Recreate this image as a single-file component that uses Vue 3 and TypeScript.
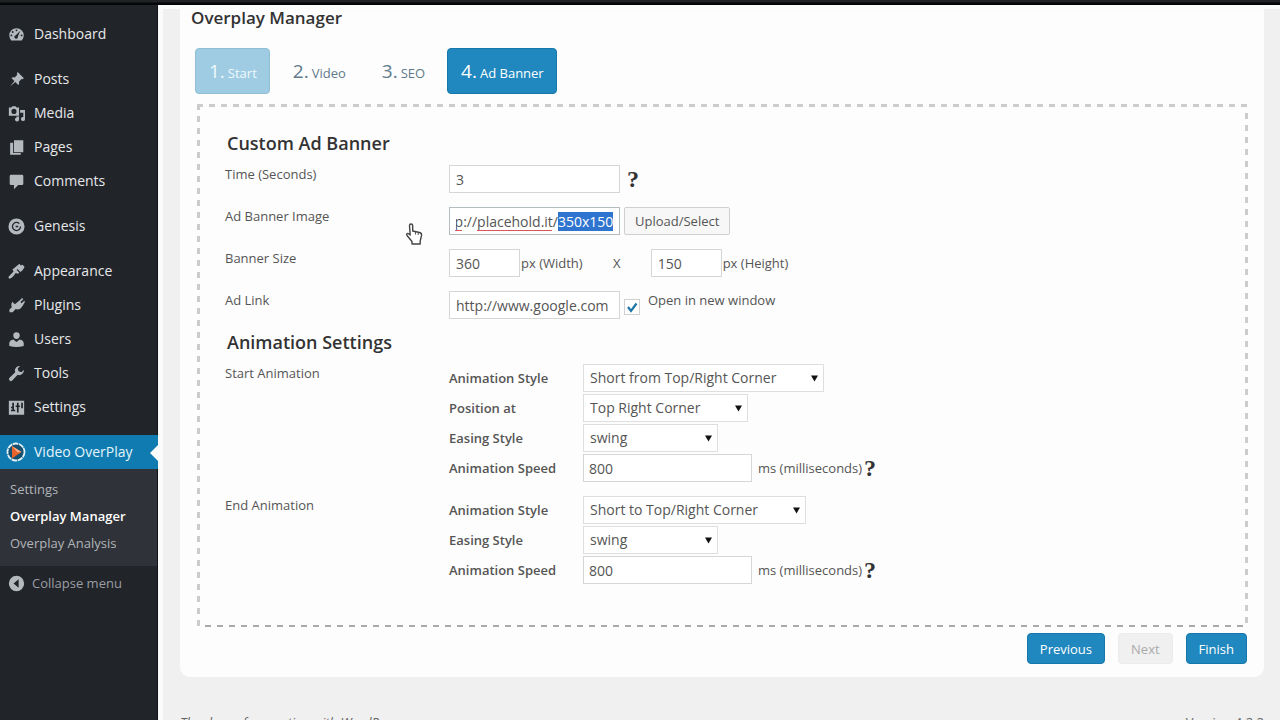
<script setup lang="ts">
import { nextTick, onMounted, ref } from 'vue'

interface MenuItem {
  label: string
  icon: string
}

const menuGroups: MenuItem[][] = [
  [{ label: 'Dashboard', icon: 'dashboard' }],
  [
    { label: 'Posts', icon: 'pin' },
    { label: 'Media', icon: 'media' },
    { label: 'Pages', icon: 'pages' },
    { label: 'Comments', icon: 'comments' },
  ],
  [{ label: 'Genesis', icon: 'genesis' }],
  [
    { label: 'Appearance', icon: 'appearance' },
    { label: 'Plugins', icon: 'plugins' },
    { label: 'Users', icon: 'users' },
    { label: 'Tools', icon: 'tools' },
    { label: 'Settings', icon: 'settings' },
  ],
]

const iconPaths: Record<string, string> = {
  dashboard:
    'M3.8 17A8.6 8.6 0 0 1 1.5 11a8.5 8.5 0 0 1 17 0c0 2.300-.9 4.400-2.300 6zM10 4a1.100 1.100 0 1 0 0 2.200A1.100 1.100 0 0 0 10 4zM5.500 6a1.100 1.100 0 1 0 0 2.200A1.100 1.100 0 0 0 5.500 6zM4 10a1.100 1.100 0 1 0 0 2.200A1.100 1.100 0 0 0 4 10zm12 0a1.100 1.100 0 1 0 0 2.200A1.100 1.100 0 0 0 16 10zm-1.500-4.500l-5.300 5.300a2.100 2.100 0 1 0 2.400 1.600z',
  pin: 'M10.400 3l1-1.700 7.300 7.200-1.700 1.100-1.100-.2-3 3.100c.4 1.600.2 2.900-.8 3.900l-3.500-3.500-6.200 5.200 5.100-6.300L4 8.300c1-1 2.300-1.200 3.900-.8l3-3.100z',
  media:
    'M4 3l1-1.500h4L10 3h3v9.500H1V3zM7 4.500a3 3 0 1 0 0 6 3 3 0 0 0 0-6zM14.200 6H20v10.500a2.400 2.400 0 1 1-2-2.300V9h-3.800zM10 13.500h3v3.500a2.400 2.400 0 1 1-3-2.300z',
  pages: 'M7 1.500h11v14H7zM2.500 4.500H6v12h9v2H2.500z',
  comments: 'M3.500 2h13A1.500 1.500 0 0 1 18 3.500v9a1.500 1.500 0 0 1-1.500 1.500H12l-5 5v-5H3.500A1.500 1.500 0 0 1 2 12.500v-9A1.500 1.500 0 0 1 3.500 2z',
  genesis:
    'M10 .5a9.500 9.500 0 1 1 0 19 9.500 9.500 0 0 1 0-19zm0 4a5.500 5.500 0 1 0 5.500 5.500H14a4 4 0 1 1-1.200-2.900l1-1A5.500 5.500 0 0 0 10 4.500zm-1 4.500v2h3V9z',
  appearance:
    'M13.500 1l1.500 2 2-1 2.500 2.500c-1 2.500-2.500 4.500-5 6.200l-3.300-3.500-.9 1 3 3.300-1.600 1.200-2.700-1c-1.600 3-4.200 5.800-7.300 6.800-.8-.5-1.200-1-1.200-1.900C2.600 14 5 12 6.500 9.800L5.200 7.500z',
  plugins:
    'M13.200 4.400l3.400-3.300 1.400 1.400-3.400 3.300 1.500 1.500 3-2.900.9 1.200-2.700 4.600-2.500 3.300c-2 1.300-3.900 1.600-5.800.7L5.500 18H1.700v-3.200L4.500 12c-.9-2-.6-4.600.6-6.400L8 8.500z',
  users:
    'M10 9.500c-2.300 0-3.800-2-3.800-4.400C6.200 3 7.500 1.500 10 1.500s3.800 1.500 3.800 3.600c0 2.400-1.500 4.400-3.800 4.400zM6.300 10L10 13l3.700-3c3 .5 4.800 2 4.800 4.500v3.200c-5.600 1.600-11.400 1.600-17 0v-3.200c0-2.500 1.800-4 4.800-4.500z',
  tools:
    'M18.600 5.700a5.300 5.300 0 0 1-7.200 5.800L5 18.200a2.200 2.200 0 0 1-3.200-3.100l6.700-6.500A5.300 5.300 0 0 1 14.200 1.300L11.400 4l1.100 3.400 3.400 1z',
  settings:
    'M1 2h18v16.500H1zM5 4.500V9H3.500v2H5v1.500H3.500v2h5v-2H7V4.500zm5.500 0v3H9v2h1.500V16h2V9.500H14v-2h-1.500v-3zm5 0V11h2V4.500z',
}

const steps = [
  { number: 1, label: 'Start', state: 'done' },
  { number: 2, label: 'Video', state: 'idle' },
  { number: 3, label: 'SEO', state: 'idle' },
  { number: 4, label: 'Ad Banner', state: 'current' },
]

interface AnimationField {
  id: string
  label: string
  kind: 'select' | 'text'
  value: string
  size: string
}

const animations: { title: string; fields: AnimationField[] }[] = [
  {
    title: 'Start Animation',
    fields: [
      { id: 'start-style', label: 'Animation Style', kind: 'select', value: 'Short from Top/Right Corner', size: 'xl' },
      { id: 'start-position', label: 'Position at', kind: 'select', value: 'Top Right Corner', size: 'md' },
      { id: 'start-easing', label: 'Easing Style', kind: 'select', value: 'swing', size: 'sm' },
      { id: 'start-speed', label: 'Animation Speed', kind: 'text', value: '800', size: 'md' },
    ],
  },
  {
    title: 'End Animation',
    fields: [
      { id: 'end-style', label: 'Animation Style', kind: 'select', value: 'Short to Top/Right Corner', size: 'lg' },
      { id: 'end-easing', label: 'Easing Style', kind: 'select', value: 'swing', size: 'sm' },
      { id: 'end-speed', label: 'Animation Speed', kind: 'text', value: '800', size: 'md' },
    ],
  },
]

const seconds = ref('3')
const bannerUrl = ref('http://placehold.it/350x150')
const bannerWidth = ref('360')
const bannerHeight = ref('150')
const adLink = ref('http://www.google.com')
const newWindow = ref(true)
const urlInput = ref<HTMLInputElement | null>(null)

onMounted(async () => {
  await nextTick()
  const el = urlInput.value
  if (!el) return
  el.focus({ preventScroll: true })
  el.setSelectionRange(bannerUrl.value.lastIndexOf('/') + 1, bannerUrl.value.length)
  el.scrollLeft = el.scrollWidth
})
</script>

<template>
  <div class="admin">
    <div class="topbar"></div>
    <nav class="sidebar" aria-label="Main menu">
      <ul v-for="(group, g) in menuGroups" :key="g" class="group">
        <li v-for="item in group" :key="item.label">
          <a href="#" class="item">
            <svg class="icon" viewBox="0 0 20 20" aria-hidden="true">
              <path :d="iconPaths[item.icon]" fill-rule="evenodd" />
            </svg>
            {{ item.label }}
          </a>
        </li>
      </ul>
      <ul class="group last">
        <li>
          <a href="#" class="item active">
            <svg class="icon logo" viewBox="0 0 20 20" aria-hidden="true">
              <circle cx="10" cy="10" r="8.500" fill="#14506f" stroke="#e4f2f8" stroke-width="1.800" stroke-dasharray="5.500 .6" />
              <path d="M6 4l9.500 6L6 16.500z" fill="#e8622c" />
              <path d="M6 4l9.500 6-4 .3z" fill="#f7b08c" />
            </svg>
            Video OverPlay
          </a>
          <ul class="submenu">
            <li><a href="#">Settings</a></li>
            <li><a href="#" class="selected">Overplay Manager</a></li>
            <li><a href="#">Overplay Analysis</a></li>
          </ul>
        </li>
      </ul>
      <button type="button" class="collapse">
        <svg class="icon" viewBox="0 0 20 20" aria-hidden="true">
          <path d="M10 1a9 9 0 1 1 0 18 9 9 0 0 1 0-18zM12.500 5l-6 5 6 5z" fill-rule="evenodd" />
        </svg>
        Collapse menu
      </button>
    </nav>

    <main class="main">
      <section class="card">
        <h2>Overplay Manager</h2>
        <nav class="steps" aria-label="Steps">
          <a v-for="s in steps" :key="s.number" href="#" class="step" :class="s.state">
            <span class="num">{{ s.number }}.</span><span>{{ s.label }}</span>
          </a>
        </nav>

        <form class="panel" @submit.prevent>
          <h3>Custom Ad Banner</h3>
          <div class="rows">
            <div class="row">
              <label for="seconds">Time (Seconds)</label>
              <div class="controls">
                <input id="seconds" v-model="seconds" type="text" class="text wide" />
                <button type="button" class="help" aria-label="Help">?</button>
              </div>
            </div>
            <div class="row">
              <label for="banner-image">Ad Banner Image</label>
              <div class="controls">
                <span class="url">
                  <input id="banner-image" ref="urlInput" v-model="bannerUrl" type="text" class="text wide focused" spellcheck="false" />
                  <i class="squiggle short"></i>
                  <i class="squiggle long"></i>
                </span>
                <button type="button" class="upload">Upload/Select</button>
              </div>
            </div>
            <div class="row">
              <label for="banner-width">Banner Size</label>
              <div class="controls">
                <input id="banner-width" v-model="bannerWidth" type="text" class="text small" />
                <label for="banner-width" class="unit">px (Width)</label>
                <span class="times">X</span>
                <input id="banner-height" v-model="bannerHeight" type="text" class="text small" />
                <label for="banner-height" class="unit">px (Height)</label>
              </div>
            </div>
            <div class="row">
              <label for="ad-link">Ad Link</label>
              <div class="controls">
                <input id="ad-link" v-model="adLink" type="text" class="text wide" />
                <span class="tick">
                  <input id="new-window" v-model="newWindow" type="checkbox" />
                  <svg v-if="newWindow" viewBox="0 0 16 16" aria-hidden="true">
                    <path d="M4 8l3 4 5.500-7.500" fill="none" stroke="#1e74a8" stroke-width="2.200" />
                  </svg>
                </span>
                <label for="new-window" class="newwin">Open in new window</label>
              </div>
            </div>
          </div>

          <h3>Animation Settings</h3>
          <div class="rows">
            <div v-for="a in animations" :key="a.title" class="row">
              <span class="caption">{{ a.title }}</span>
              <div class="stack">
                <div v-for="f in a.fields" :key="f.id" class="field">
                  <label :for="f.id">{{ f.label }}</label>
                  <span v-if="f.kind === 'select'" class="select" :class="f.size">
                    <select :id="f.id">
                      <option>{{ f.value }}</option>
                    </select>
                    <svg viewBox="0 0 8 8" aria-hidden="true"><path d="M0 1h8L4 8z" /></svg>
                  </span>
                  <template v-else>
                    <input :id="f.id" type="text" class="text wide" :value="f.value" />
                    <span class="ms">ms (milliseconds)</span>
                    <button type="button" class="help" aria-label="Help">?</button>
                  </template>
                </div>
              </div>
            </div>
          </div>
        </form>

        <div class="actions">
          <button type="button" class="btn">Previous</button>
          <button type="button" class="btn off" disabled>Next</button>
          <button type="button" class="btn">Finish</button>
        </div>
      </section>

      <footer class="footer">
        <span class="thanks">Thank you for creating with <a href="#">WordPress</a>.</span>
        <span>Version 4.2.2</span>
      </footer>
    </main>

    <svg class="pointer" viewBox="0 0 18 24" aria-hidden="true">
      <path
        d="M4.500 3.500c0-2 3-2 3.200 0v5.500l6.800 1.500c1.800.4 2.300 1.500 2 3.200l-1.300 5.300v3H7v-2.500L2 13.500c-1-1.800.6-2.800 2-1.500l1.200 1z"
        fill="#fff"
        stroke="#444"
        stroke-width="1.400"
        stroke-linejoin="round"
      />
      <path d="M10.500 10v2.500M13.200 10.500v2.500" stroke="#555" />
    </svg>
  </div>
</template>

<style>
html,
body {
  background: #f0f0f0;
}
body {
  overflow: hidden;
}
</style>

<style scoped>
.admin {
  position: relative;
  display: grid;
  grid-template-columns: 158px 1fr;
  grid-template-rows: 5px 1fr;
  min-height: 100vh;
  font-family: 'Open Sans', 'Noto Sans', sans-serif;
  font-size: 13px;
  line-height: 18px;
  color: #555;
}
.admin *,
.admin *::before {
  box-sizing: border-box;
}
ul {
  list-style: none;
  margin: 0;
  padding: 0;
}
a {
  text-decoration: none;
}
button,
input,
select {
  font: inherit;
  color: inherit;
  margin: 0;
  outline: none;
}
.topbar {
  grid-column: 1 / -1;
  background: linear-gradient(#202226 40%, #050607 60%);
}

.sidebar {
  background: #212429;
  padding-top: 12px;
  border-right: 1px solid #101216;
}
.group {
  margin-bottom: 11px;
}
.group.last {
  margin: 0;
}
.item {
  position: relative;
  display: flex;
  align-items: center;
  gap: 9px;
  height: 34px;
  padding-left: 8px;
  font-size: 14px;
  color: #e6e8ea;
}
.icon {
  width: 17px;
  height: 17px;
  fill: #b4b9be;
  flex: none;
}
.item.active {
  background: #0f7bb0;
  margin-right: -1px;
  color: #e4f4fb;
}
.icon.logo {
  width: 20px;
  height: 20px;
  margin: 0 -1px 0 -2px;
}
.item.active::before {
  content: '';
  position: absolute;
  right: 0;
  top: 10px;
  border: 8px solid transparent;
  border-left: 0;
  border-right-color: #fafafa;
}
.submenu {
  background: #2f3238;
  padding: 7px 0 9px;
}
.submenu a {
  display: block;
  padding-left: 10px;
  line-height: 27px;
  color: #b1b5ba;
}
.submenu a.selected {
  color: #fff;
  font-weight: 600;
}
.collapse {
  display: flex;
  align-items: center;
  gap: 7px;
  height: 34px;
  padding: 0 0 0 8px;
  border: 0;
  background: none;
  color: #9a9ea4;
}

.main {
  min-width: 0;
  border-left: 5px solid #fbfbfb;
  border-top: 4px solid #fbfbfb;
  padding: 0 16px 20px 17px;
  background: #f0f0f0;
}
.card {
  background: #fdfdfd;
  border-radius: 0 0 10px 10px;
  padding: 0 16px 13px 17px;
}
h2 {
  margin: 0 0 18px -6px;
  padding-bottom: 3px;
  font-size: 17px;
  line-height: 18px;
  font-weight: 600;
  color: #333;
}
.steps {
  display: flex;
  gap: 9px;
  margin-left: -2px;
}
.step {
  display: flex;
  align-items: baseline;
  gap: 3px;
  height: 46px;
  padding: 0 12px 0 13px;
  border: 1px solid transparent;
  border-radius: 4px;
  line-height: 44px;
  color: #5f7a8c;
  white-space: nowrap;
}
.num {
  font-size: 19px;
}
.step.done {
  background: #9fcce2;
  border-color: #8fbfd6;
  color: #f0f9fd;
}
.step.current {
  background: #2088be;
  border-color: #1577aa;
  color: #fff;
}

.panel {
  margin-top: 10px;
  padding: 28px 28px 43px;
  background:
    repeating-linear-gradient(90deg, #ccc 0 6px, transparent 6px 12px) 0 0 / 100% 3px no-repeat,
    repeating-linear-gradient(90deg, #aaa 0 6px, transparent 6px 12px) 8px 100% / 100% 2px no-repeat,
    repeating-linear-gradient(#ccc 0 6px, transparent 6px 12px) 0 0 / 3px 100% no-repeat,
    repeating-linear-gradient(#ccc 0 6px, transparent 6px 12px) 100% 9px / 3px 100% no-repeat;
}
h3 {
  margin: 0 0 11px 2px;
  font-size: 18px;
  line-height: 22px;
  font-weight: 600;
  color: #333;
}
.rows {
  display: grid;
  gap: 14px;
}
.rows + h3 {
  margin-top: 12px;
}
.row {
  display: grid;
  grid-template-columns: 224px 1fr;
  align-items: start;
}
.controls {
  display: flex;
  align-items: center;
  height: 28px;
}
.text {
  height: 28px;
  padding: 0 6px;
  border: 1px solid #d6d6d6;
  background: #fff;
  font-size: 14px;
  color: #555;
}
.wide {
  width: 171px;
}
.field .wide {
  width: 169px;
  padding: 0 5px;
}
.small {
  width: 71px;
}
.focused {
  border-color: #b5bcc0;
}
.focused::selection {
  background: #2f74cf;
  color: #fff;
}
.url {
  position: relative;
  display: flex;
}
.squiggle {
  position: absolute;
  bottom: 4px;
  height: 1px;
  background: #d9565c;
}
.squiggle.short {
  left: 6px;
  width: 7px;
}
.squiggle.long {
  left: 28px;
  width: 75px;
}
.help {
  margin-left: 7px;
  padding: 0;
  border: 0;
  background: none;
  font: bold 24px/28px 'Liberation Serif', serif;
  color: #333;
}
.upload {
  height: 28px;
  margin-left: 4px;
  padding: 0 10px;
  border: 1px solid #d0d0d0;
  border-radius: 2px;
  background: #f7f7f7;
}
.unit {
  margin-left: 1px;
}
.times {
  width: 68px;
  text-align: center;
}
.tick {
  position: relative;
  display: flex;
  align-self: flex-end;
  width: 16px;
  height: 20px;
  margin-left: 4px;
}
.tick input {
  appearance: none;
  width: 16px;
  height: 16px;
  border: 1px solid #d0d0d0;
  background: #fff;
}
.tick svg {
  position: absolute;
  left: 0;
  top: 0;
  width: 16px;
  height: 16px;
  pointer-events: none;
}
.newwin {
  align-self: flex-start;
  margin-left: 8px;
}

.stack {
  display: grid;
  gap: 2px;
}
.field {
  display: flex;
  align-items: center;
  height: 28px;
}
.field label {
  width: 134px;
  font-weight: 600;
}
.select {
  position: relative;
  display: flex;
}
.select select {
  appearance: none;
  width: 100%;
  height: 28px;
  padding: 0 6px;
  border: 1px solid #dedede;
  border-radius: 0;
  background: #fff;
  font-size: 14px;
  color: #555;
}
.select svg {
  position: absolute;
  right: 6px;
  top: 10px;
  width: 7px;
  height: 8px;
  fill: #111;
  pointer-events: none;
}
.select.xl {
  width: 241px;
}
.select.lg {
  width: 223px;
}
.select.md {
  width: 165px;
}
.select.sm {
  width: 135px;
}
.ms {
  margin-left: 6px;
}
.ms + .help {
  margin-left: 2px;
}

.actions {
  display: flex;
  justify-content: flex-end;
  gap: 13px;
  margin: 6px 1px 0 0;
}
.btn {
  height: 31px;
  padding: 0 12px;
  border: 1px solid #1577aa;
  border-radius: 4px;
  background: #2088be;
  color: #fff;
}
.btn.off {
  border-color: #ececec;
  background: #f0f0f0;
  color: #aaa;
}
.footer {
  display: flex;
  justify-content: space-between;
  margin-top: 36px;
  color: #666;
}
.thanks {
  font-style: italic;
}
.footer a {
  color: inherit;
}
.pointer {
  position: absolute;
  left: 405px;
  top: 222px;
  width: 18px;
  height: 24px;
}
</style>
